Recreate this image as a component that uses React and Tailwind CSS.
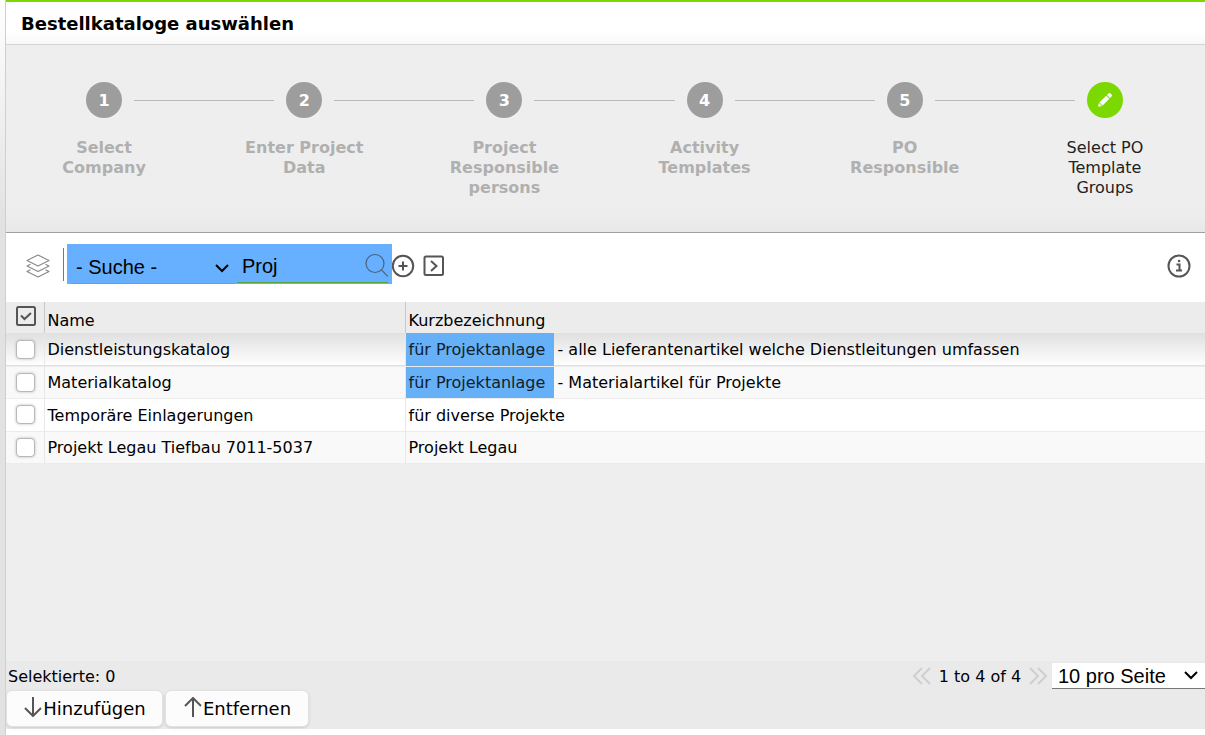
import React from "react";

const steps = [
  { n: "1", label: "Select Company" },
  { n: "2", label: "Enter Project Data" },
  { n: "3", label: "Project Responsible persons" },
  { n: "4", label: "Activity Templates" },
  { n: "5", label: "PO Responsible" },
  { n: "6", label: "Select PO Template Groups", active: true },
];

const rows = [
  { name: "Dienstleistungskatalog", mark: "für Projektanlage", rest: "- alle Lieferantenartikel welche Dienstleitungen umfassen" },
  { name: "Materialkatalog", mark: "für Projektanlage", rest: "- Materialartikel für Projekte" },
  { name: "Temporäre Einlagerungen", rest: "für diverse Projekte" },
  { name: "Projekt Legau Tiefbau 7011-5037", rest: "Projekt Legau" },
];

function Step({ step, first, last }) {
  return (
    <li className="flex min-w-0 flex-1 flex-col items-center" aria-current={step.active ? "step" : undefined}>
      <div className="flex w-full items-center">
        <span className={first ? "mr-3 h-px flex-1" : "mr-3 h-px flex-1 bg-[#bababa]"} />
        {step.active ? (
          <span className="flex size-9 items-center justify-center rounded-full bg-[#7bd800]">
            <svg className="size-4" viewBox="0 0 16 16" fill="#fff">
              <path d="M1.2 14.8l.7-3.8 3.1 3.1z" />
              <path d="M2.4 10.3l6.9-6.6 3.1 3.1-6.8 6.8z" />
              <path d="M10 3l1.5-1.4c.8-.8 1.5-.7 2.2 0l.8.8c.7.7.7 1.4 0 2.1L13.1 6z" />
            </svg>
          </span>
        ) : (
          <span className="flex size-9 items-center justify-center rounded-full bg-[#9d9d9d] pt-0.5 text-base font-bold text-white">{step.n}</span>
        )}
        <span className={last ? "ml-3 h-px flex-1" : "ml-3 h-px flex-1 bg-[#bababa]"} />
      </div>
      <span className={step.active ? "mt-5 w-32 text-center leading-5 text-[#222]" : "mt-5 w-32 text-center font-bold leading-5 text-[#b0b0b0]"}>
        {step.label}
      </span>
    </li>
  );
}

export default function App() {
  return (
    <div className="flex min-h-screen bg-linear-to-b from-white to-[#e2e2e2] to-30% pl-[5px] font-['DejaVu_Sans',Verdana,sans-serif] text-base text-black">
      <main className="flex min-w-0 flex-1 flex-col overflow-hidden border-l border-[#cfcfcf] bg-white pb-1.5">
        <header className="border-t-2 border-[#7bd800]">
          <h1 className="flex h-[42px] items-center bg-linear-to-b from-white from-70% to-[#f8f8f8] px-[15px] pt-0.5 text-lg font-bold">Bestellkataloge auswählen</h1>
        </header>

        <nav aria-label="Progress" className="border-y border-t-[#d4d4d4] border-b-[#a0a0a0] bg-linear-to-b from-[#eeeeee] from-90% to-[#e8e8e8] pt-[37px] pb-[34px]">
          <ol className="-ml-0.5 flex">
            {steps.map((s, i) => (
              <Step key={s.n} step={s} first={i === 0} last={i === steps.length - 1} />
            ))}
          </ol>
        </nav>

        <div className="flex h-[69px] items-center pr-3.5 pl-5">
          <button type="button" aria-label="Layers" className="mb-1">
            <svg className="size-6" viewBox="0 0 24 24" fill="none" stroke="#8a8a8a" strokeWidth="1.2" strokeLinejoin="round">
              <path d="M12 1l11 5.5-11 5.500L1 6.500z" />
              <path d="M4.500 10.300L1 12l11 5.500L23 12l-3.500-1.700M4.500 15.800L1 17.500 12 23l11-5.500-3.500-1.700" />
            </svg>
          </button>
          <span className="mr-[3px] mb-1.5 ml-[13px] h-[33px] w-px bg-[#777]" />
          <div className="mb-2 flex h-10 bg-[#66b0ff] px-1 font-['Liberation_Sans',Arial,sans-serif] text-xl">
            <div className="relative w-[164px]">
              <select aria-label="Suchfeld" className="h-full w-full appearance-none border-b border-[#5ba5ce] bg-transparent pt-2 pl-[5px]" defaultValue="- Suche -">
                <option>- Suche -</option>
              </select>
              <svg className="pointer-events-none absolute right-[5px] bottom-2 size-4" viewBox="0 0 16 16" fill="none" stroke="#000" strokeWidth="2">
                <path d="M2 5l6 6 6-6" />
              </svg>
            </div>
            <div className="ml-0.5 mb-px flex w-[151px] items-center border-b border-[#55a33c]">
              <input aria-label="Suchbegriff" defaultValue="Proj" className="h-full min-w-0 flex-1 bg-transparent pt-2 pl-[5px] outline-none" />
              <button type="button" aria-label="Suchen">
                <svg className="mt-1 size-6" viewBox="0 0 24 24" fill="none" stroke="#49637d" strokeWidth="1.2">
                  <circle cx="11" cy="10.5" r="9" />
                  <path d="M17.400 16.900L24 23.500" />
                </svg>
              </button>
            </div>
          </div>
          <button type="button" aria-label="Hinzufügen" className="mb-1">
            <svg className="size-6" viewBox="0 0 24 24" fill="none" stroke="#555" strokeWidth="2">
              <circle cx="11" cy="12" r="10.2" />
              <path d="M11 7.500v9M6.500 12h9" />
            </svg>
          </button>
          <button type="button" aria-label="Erweitern" className="mb-1 ml-1.5">
            <svg className="size-6" viewBox="0 0 24 24" fill="none" stroke="#555" strokeWidth="2">
              <rect x="2.500" y="2.500" width="18.500" height="18.500" rx="1.500" />
              <path d="M9 7l5.500 5L9 17" />
            </svg>
          </button>
          <button type="button" aria-label="Information" className="mb-1 ml-auto">
            <svg className="size-6" viewBox="0 0 24 24" fill="none" stroke="#555" strokeWidth="2">
              <circle cx="12" cy="12" r="10.5" />
              <path d="M9.500 10.500h3v6M9 16.500h6" />
              <path d="M11 7h2.200" strokeWidth="2.200" />
            </svg>
          </button>
        </div>

        <div className="flex-1 bg-[#eeeeee]">
          <table className="w-full table-fixed border-collapse text-left">
            <colgroup>
              <col className="w-[38px]" />
              <col className="w-[361px]" />
              <col />
            </colgroup>
            <thead>
              <tr className="h-[31px] bg-[#ececec]">
                <th className="border-r border-[#c8c8c8] p-0 align-top">
                  <label className="block">
                    <input type="checkbox" aria-label="Alle auswählen" defaultChecked className="sr-only" />
                    <svg className="mt-1 ml-2.5 size-5" viewBox="0 0 20 20" fill="none" stroke="#555" strokeWidth="2">
                      <rect x="1" y="1" width="18" height="18" rx="1.5" />
                      <path d="M5 9.500l3.500 3.500L15 7" />
                    </svg>
                  </label>
                </th>
                <th className="border-r border-[#c8c8c8] px-[3px] pt-1.5 pb-0 font-normal">Name</th>
                <th className="px-[3px] pt-1.5 pb-0 font-normal">Kurzbezeichnung</th>
              </tr>
            </thead>
            <tbody>
              {rows.map((r) => (
                <tr
                  key={r.name}
                  className="border-b border-[#ececec] odd:h-[33px] odd:bg-white even:h-8 even:bg-[#f9f9f9] first:bg-linear-to-b first:from-[#e0e0e0] first:to-[#fefefe]"
                >
                  <td className="border-r border-[#e8e8e8] p-0">
                    <input
                      type="checkbox"
                      aria-label={r.name}
                      className="ml-2.5 block size-[19px] appearance-none rounded border border-[#b8b8b8] bg-white shadow-[0_0_3px_#bbb]"
                    />
                  </td>
                  <td className="border-r border-[#e8e8e8] px-[3px] pt-0.5 pb-0">{r.name}</td>
                  <td className="h-px p-0">
                    <div className="flex h-full items-center">
                      {r.mark && (
                        <mark className="mr-px flex h-full w-[148px] items-center self-stretch bg-[#66b0f8] px-[3px] pt-0.5 text-[#10202c]">{r.mark}</mark>
                      )}
                      <span className="px-[3px] pt-0.5">{r.rest}</span>
                    </div>
                  </td>
                </tr>
              ))}
            </tbody>
          </table>
        </div>

        <footer className="bg-[#eaeaea] pb-0.5">
          <div className="flex h-[29px] items-center pl-0.5">
            <span className="pt-0.5">Selektierte: 0</span>
            <div className="ml-auto flex items-center">
              <button type="button" aria-label="Vorherige Seite" disabled>
                <svg className="size-5" viewBox="0 0 20 20" fill="none" stroke="#cfcfcf" strokeWidth="2">
                  <path d="M10 2L2 10l8 8M18 2l-8 8 8 8" />
                </svg>
              </button>
              <span className="w-24 pt-0.5 text-center">1 to 4 of 4</span>
              <button type="button" aria-label="Nächste Seite" disabled>
                <svg className="size-5" viewBox="0 0 20 20" fill="none" stroke="#cfcfcf" strokeWidth="2">
                  <path d="M2 2l8 8-8 8M10 2l8 8-8 8" />
                </svg>
              </button>
              <div className="relative mt-px ml-1 w-[153px] font-['Liberation_Sans',Arial,sans-serif] text-xl">
                <select aria-label="Einträge pro Seite" className="block h-[26px] w-full appearance-none border-b border-[#777] bg-white pl-1.5 leading-6" defaultValue="10 pro Seite">
                  <option>10 pro Seite</option>
                </select>
                <svg className="pointer-events-none absolute top-1 right-1.5 size-4" viewBox="0 0 16 16" fill="none" stroke="#000" strokeWidth="2">
                  <path d="M2 5l6 6 6-6" />
                </svg>
              </div>
            </div>
          </div>
          <div className="flex gap-0.5 text-lg">
            <button type="button" className="flex h-[37px] w-[157px] items-center justify-center rounded-md border border-[#e2e2e2] bg-[#fcfcfc] shadow-sm">
              <svg className="mb-1 size-5" viewBox="0 0 20 20" fill="none" stroke="#555" strokeWidth="2">
                <path d="M10 0v19M2 11l8 8 8-8" />
              </svg>
              Hinzufügen
            </button>
            <button type="button" className="flex h-[37px] w-36 items-center justify-center rounded-md border border-[#e2e2e2] bg-[#fcfcfc] shadow-sm">
              <svg className="mb-1 size-5" viewBox="0 0 20 20" fill="none" stroke="#555" strokeWidth="2">
                <path d="M10 20V1M2 9l8-8 8 8" />
              </svg>
              Entfernen
            </button>
          </div>
        </footer>
      </main>
    </div>
  );
}
